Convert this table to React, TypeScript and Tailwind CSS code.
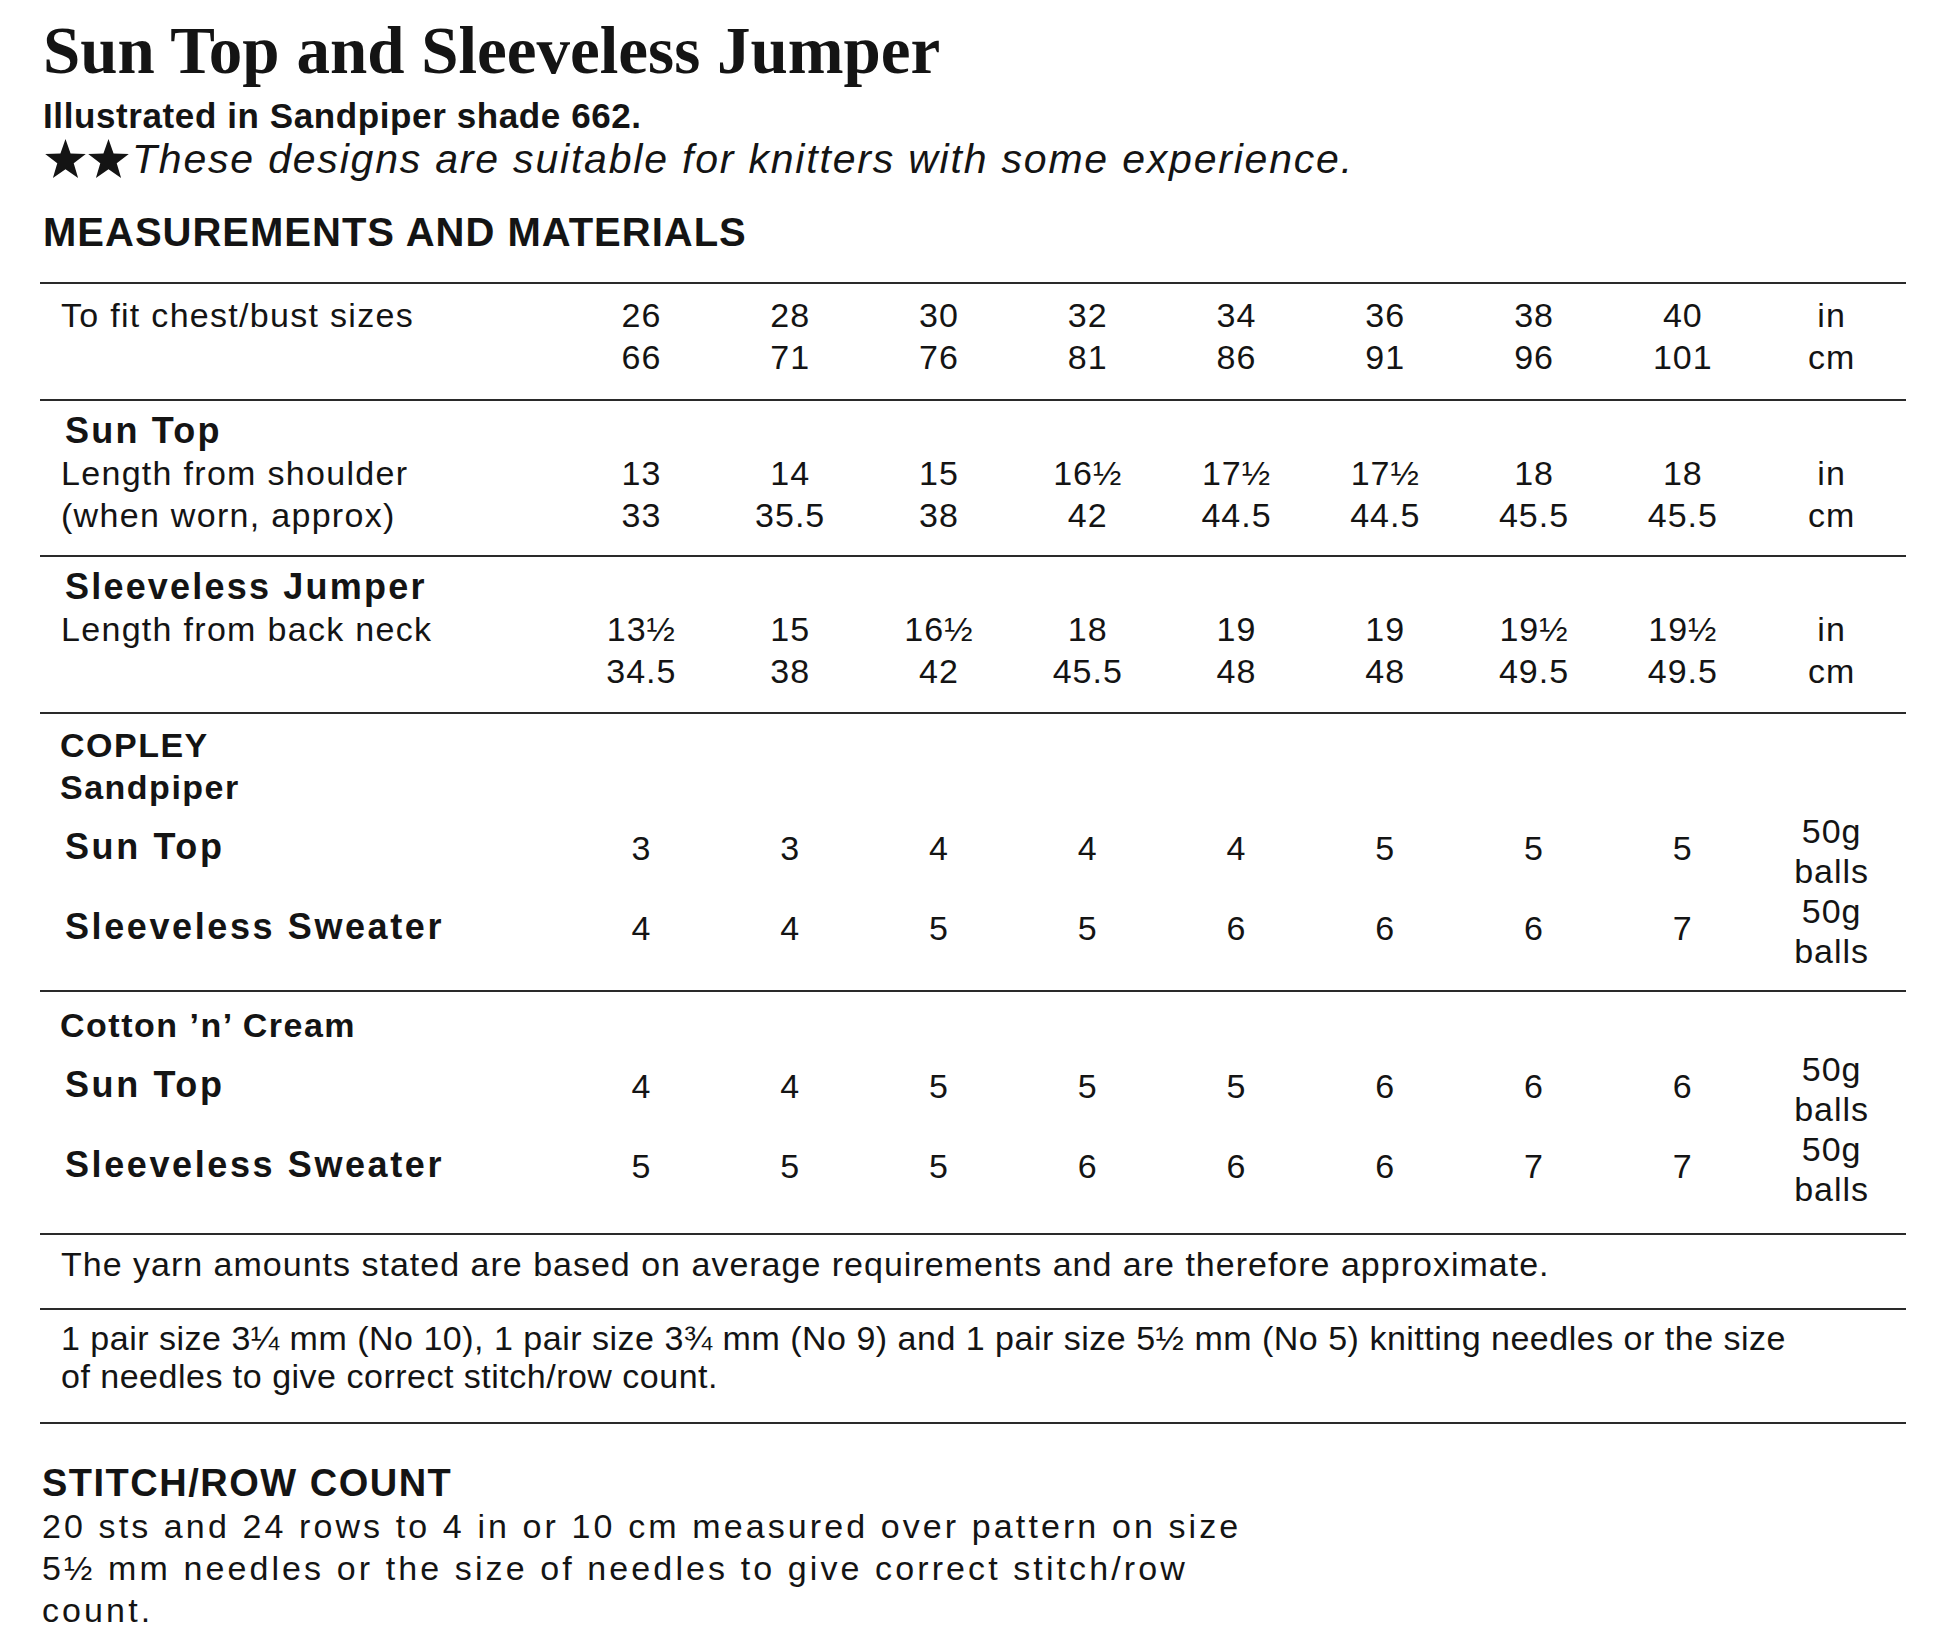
const grid = "grid grid-cols-[527px_repeat(9,minmax(0,1fr))]";

const chest = { inch: ["26", "28", "30", "32", "34", "36", "38", "40"], cm: ["66", "71", "76", "81", "86", "91", "96", "101"] };
const sunTop = { inch: ["13", "14", "15", "16½", "17½", "17½", "18", "18"], cm: ["33", "35.5", "38", "42", "44.5", "44.5", "45.5", "45.5"] };
const jumper = { inch: ["13½", "15", "16½", "18", "19", "19", "19½", "19½"], cm: ["34.5", "38", "42", "45.5", "48", "48", "49.5", "49.5"] };

const copley = { sunTop: [3, 3, 4, 4, 4, 5, 5, 5], sweater: [4, 4, 5, 5, 6, 6, 6, 7] };
const cotton = { sunTop: [4, 4, 5, 5, 5, 6, 6, 6], sweater: [5, 5, 5, 6, 6, 6, 7, 7] };

function Star() {
  return (
    <svg viewBox="0 0 24 24" className="w-[43px] h-[42px] shrink-0" fill="#141414">
      <polygon points="12,0.6 14.9,8.9 23.6,9.1 16.7,14.4 19.2,22.9 12,17.8 4.8,22.9 7.3,14.4 0.4,9.1 9.1,8.9" />
    </svg>
  );
}

// two stacked values, inches over centimetres
function Pair({ top, bottom }: { top: string; bottom: string }) {
  return (
    <div className="text-center leading-[42px]">
      <div>{top}</div>
      <div>{bottom}</div>
    </div>
  );
}

function MeasureRow({
  heading,
  lines,
  data,
  pad,
}: {
  heading?: string;
  lines: string[];
  data: { inch: string[]; cm: string[] };
  pad: string;
}) {
  return (
    <div className={`${grid} border-t-2 border-[#2a2a2a] ${pad}`}>
      <div className="pl-[21px] leading-[42px]">
        {heading && <div className="pl-[4px] text-[36px] font-bold tracking-[2.2px]">{heading}</div>}
        {lines.map((l) => (
          <div key={l} className="tracking-[1.3px]">
            {l}
          </div>
        ))}
      </div>
      {data.inch.map((v, i) => (
        <div key={i} className={heading ? "pt-[42px]" : ""}>
          <Pair top={v} bottom={data.cm[i]} />
        </div>
      ))}
      <div className={heading ? "pt-[42px]" : ""}>
        <Pair top="in" bottom="cm" />
      </div>
    </div>
  );
}

function YarnLine({ label, values }: { label: string; values: number[] }) {
  return (
    <div className={`${grid} h-[80px] items-center`}>
      <div className="pl-[25px] pb-[8px] text-[36px] font-bold tracking-[2.6px] leading-[42px]">{label}</div>
      {values.map((v, i) => (
        <div key={i} className="pb-[6px] text-center leading-[42px]">
          {v}
        </div>
      ))}
      <div className="text-center leading-[40px]">
        <div>50g</div>
        <div>balls</div>
      </div>
    </div>
  );
}

function YarnBlock({ names, data, pad }: { names: string[]; data: { sunTop: number[]; sweater: number[] }; pad: string }) {
  return (
    <div className={`border-t-2 border-[#2a2a2a] ${pad}`}>
      <div className="pl-[20px] text-[34px] font-bold tracking-[1.5px] leading-[42px]">
        {names.map((n) => (
          <div key={n}>{n}</div>
        ))}
      </div>
      <div className="mt-[3px]">
        <YarnLine label="Sun Top" values={data.sunTop} />
        <YarnLine label="Sleeveless Sweater" values={data.sweater} />
      </div>
    </div>
  );
}

export default function App() {
  return (
    <main className="min-h-screen bg-white text-[#141414] pl-[40px] pt-[14px] pb-[20px] font-['Liberation_Sans',Arial,sans-serif]">
      {/* heading */}
      <h1 className="ml-[3px] font-['Liberation_Serif',serif] font-bold text-[67px] leading-[72px]">Sun Top and Sleeveless Jumper</h1>
      <p className="ml-[3px] mt-[10px] text-[35px] font-bold tracking-[0.6px] leading-[40px]">Illustrated in Sandpiper shade 662.</p>
      <div className="ml-[4px] mt-[2px] flex items-center h-[42px]">
        <Star />
        <Star />
        <span className="ml-[2px] text-[41px] italic tracking-[1.8px] leading-[42px]">These designs are suitable for knitters with some experience.</span>
      </div>
      <h2 className="ml-[3px] mt-[29px] text-[40px] font-bold tracking-[1px] leading-[46px]">MEASUREMENTS AND MATERIALS</h2>

      {/* table */}
      <div className="mt-[27px] w-[1866px] text-[34px] tracking-[1px]">
        <MeasureRow lines={["To fit chest/bust sizes"]} data={chest} pad="pt-[10px] pb-[21px]" />
        <MeasureRow heading="Sun Top" lines={["Length from shoulder", "(when worn, approx)"]} data={sunTop} pad="pt-[9px] pb-[19px]" />
        <MeasureRow heading="Sleeveless Jumper" lines={["Length from back neck"]} data={jumper} pad="pt-[9px] pb-[20px]" />
        <YarnBlock names={["COPLEY", "Sandpiper"]} data={copley} pad="pt-[10px] pb-[19px]" />
        <YarnBlock names={["Cotton ’n’ Cream"]} data={cotton} pad="pt-[12px] pb-[24px]" />
        <div className="border-t-2 border-[#2a2a2a] pt-[8px] pb-[23px] pl-[21px] leading-[42px]">
          The yarn amounts stated are based on average requirements and are therefore approximate.
        </div>
        <div className="border-y-2 border-[#2a2a2a] pt-[9px] pb-[27px] pl-[21px] leading-[38px] tracking-[0.5px]">
          1 pair size 3¼ mm (No 10), 1 pair size 3¾ mm (No 9) and 1 pair size 5½ mm (No 5) knitting needles or the size
          <br />
          of needles to give correct stitch/row count.
        </div>
      </div>

      {/* stitch count */}
      <h2 className="ml-[2px] mt-[37px] text-[38px] font-bold tracking-[1.5px] leading-[44px]">STITCH/ROW COUNT</h2>
      <p className="ml-[2px] text-[34px] tracking-[3.1px] leading-[42px]">
        20 sts and 24 rows to 4 in or 10 cm measured over pattern on size
        <br />
        5½ mm needles or the size of needles to give correct stitch/row
        <br />
        count.
      </p>
    </main>
  );
}
